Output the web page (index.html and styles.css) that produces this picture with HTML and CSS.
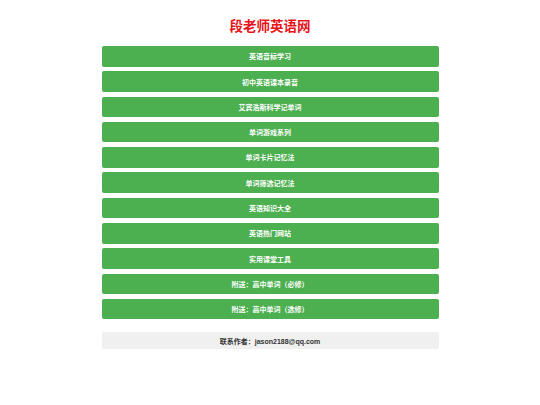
FILE: index.html
```html
<!DOCTYPE html>
<html lang="zh-CN">
<head>
<meta charset="utf-8">
<title>段老师英语网</title>
<link rel="stylesheet" href="styles.css">
</head>
<body>
<div class="page">
  <h1 class="title">段老师英语网</h1>
  <nav class="menu">
    <a class="btn" href="#">英语音标学习</a>
    <a class="btn" href="#">初中英语课本录音</a>
    <a class="btn" href="#">艾宾浩斯科学记单词</a>
    <a class="btn" href="#">单词游戏系列</a>
    <a class="btn" href="#">单词卡片记忆法</a>
    <a class="btn" href="#">单词筛选记忆法</a>
    <a class="btn" href="#">英语知识大全</a>
    <a class="btn" href="#">英语热门网站</a>
    <a class="btn" href="#">实用课堂工具</a>
    <a class="btn" href="#">附送：高中单词（必修）</a>
    <a class="btn" href="#">附送：高中单词（选修）</a>
  </nav>
  <div class="footer">联系作者：jason2188@qq.com</div>
</div>
</body>
</html>
```
FILE: styles.css
```css
html, body {
  margin: 0;
  padding: 0;
  background: #ffffff;
}
body {
  font-family: "Liberation Sans", Arial, "Noto Sans CJK SC", sans-serif;
}
.page {
  width: 337px;
  margin: 0 auto;
  padding-top: 19px;
}
.title {
  margin: 0 0 11px 0;
  text-align: center;
  color: #e8141a;
  font-size: 13.5px;
  line-height: 16px;
  font-weight: bold;
}
.menu {
  display: flex;
  flex-direction: column;
  gap: 4.8px;
}
.btn {
  display: flex;
  align-items: center;
  justify-content: center;
  height: 20.5px;
  background: #4caf50;
  color: #ffffff;
  font-size: 7px;
  font-weight: bold;
  text-decoration: none;
  border-radius: 2px;
}
.footer {
  margin-top: 13px;
  height: 17px;
  display: flex;
  align-items: center;
  justify-content: center;
  background: #f0f0f0;
  color: #333333;
  font-size: 7px;
  font-weight: bold;
  border-radius: 2px;
}
```
